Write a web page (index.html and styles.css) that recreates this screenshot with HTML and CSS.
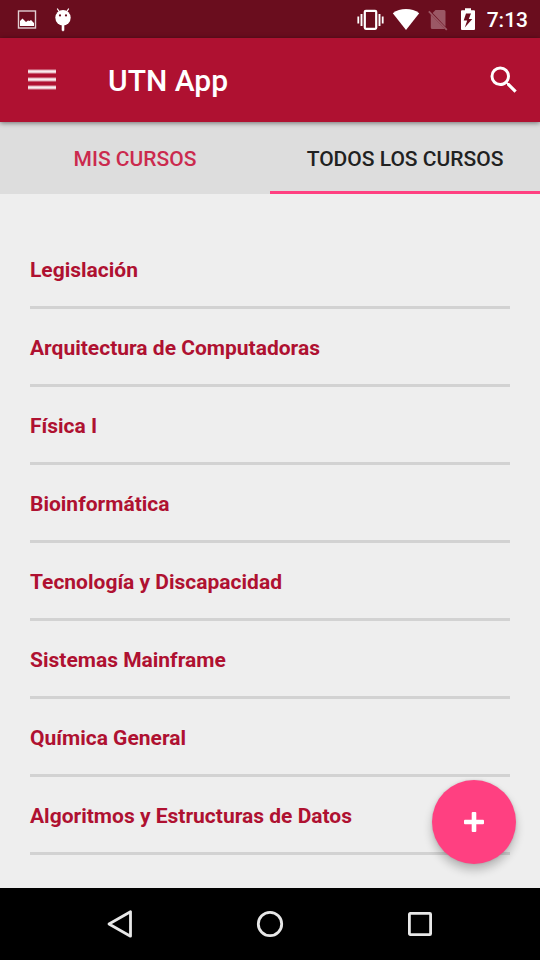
FILE: index.html
```html
<!DOCTYPE html>
<html lang="es">
<head>
<meta charset="utf-8">
<meta name="viewport" content="width=device-width, initial-scale=1">
<title>UTN App</title>
<link rel="stylesheet" href="styles.css">
</head>
<body>
<div class="screen">
  <div class="status-bar">
    <div class="status-group">
      <svg width="20" height="20" viewBox="0 0 20 20" aria-hidden="true">
        <rect x="1.500" y="1" width="17" height="17" fill="none" stroke="#e2cfd2" stroke-width="1.400"/>
        <path d="M3 16v-5l2.500-2.500L9 12l2-1.500 1.500.5 1.500-1 3 3v3z" fill="#fff"/>
      </svg>
      <svg width="18" height="24" viewBox="0 0 18 24" aria-hidden="true">
        <path d="M3.500 1l2 3M14.500 1l-2 3" stroke="#fff" stroke-width="1.300" stroke-linecap="round"/>
        <circle cx="9" cy="9.700" r="7.700" fill="#fff"/>
        <circle cx="6" cy="7.400" r="1.100" fill="#6a0d1e"/>
        <circle cx="12" cy="7.400" r="1.100" fill="#6a0d1e"/>
        <path d="M8 17h2v5a1 1 0 0 1-2 0z" fill="#fff" stroke="#fff" stroke-width=".6"/>
      </svg>
    </div>
    <div class="status-group status-system">
      <svg width="28" height="24" viewBox="0 0 28 24" aria-hidden="true">
        <rect x="8.800" y="2.800" width="11.400" height="18" rx="1" fill="none" stroke="#fff" stroke-width="2.200"/>
        <path d="M5.500 6v12M23.500 6v12" stroke="#fff" stroke-width="1.900"/>
        <path d="M2.300 8.500v7M26.700 8.500v7" stroke="#fff" stroke-width="1.800"/>
      </svg>
      <svg width="28" height="24" viewBox="0 0 28 24" aria-hidden="true">
        <path d="M14 22L.8 5.300C4.500 2.300 9 1 14 1S23.500 2.300 27.200 5.300z" fill="#fff"/>
      </svg>
      <svg width="20" height="24" viewBox="0 0 20 24" aria-hidden="true">
        <path d="M7.500 2H16a1.500 1.500 0 0 1 1.500 1.500v15.300L4.600 5zM2.800 6.500L16.800 21H4.300a1.500 1.500 0 0 1-1.500-1.500z" fill="#9b5865"/>
        <path d="M.8 3.300l18 18.500" stroke="#9b5865" stroke-width="1.700"/>
      </svg>
      <svg width="16" height="24" viewBox="0 0 16 24" aria-hidden="true">
        <path d="M5 .3h6v2h3a1 1 0 0 1 1 1V21a1 1 0 0 1-1 1H2a1 1 0 0 1-1-1V3.300a1 1 0 0 1 1-1h3z" fill="#fff"/>
        <path d="M11 5.500H6L3.700 12.500h3.500l-2.400 7 7.500-8.500H8.800z" fill="#6a0d1e"/>
      </svg>
      <time class="clock">7:13</time>
    </div>
  </div>

  <header class="app-bar">
    <button class="icon-button" type="button" aria-label="Menú">
      <svg width="28" height="24" viewBox="0 0 28 24" aria-hidden="true">
        <path d="M0 3.500h28M0 11.500h28M0 19.500h28" stroke="#fff" stroke-opacity=".6" stroke-width="4"/>
        <path d="M0 3.500h28M0 11.500h28M0 19.500h28" stroke="#fff" stroke-opacity=".8" stroke-width="2"/>
      </svg>
    </button>
    <h1 class="title">UTN App</h1>
    <button class="icon-button" type="button" aria-label="Buscar">
      <svg width="36" height="36" viewBox="0 0 24 24" aria-hidden="true">
        <path fill="#fff" d="M15.500 14h-.79l-.28-.27A6.471 6.471 0 0 0 16 9.500 6.500 6.500 0 1 0 9.500 16c1.610 0 3.090-.59 4.230-1.570l.27.28v.79l5 4.990L20.490 19l-4.990-5zm-6 0C7.010 14 5 11.990 5 9.500S7.010 5 9.500 5 14 7.010 14 9.500 11.990 14 9.500 14z"/>
      </svg>
    </button>
  </header>

  <div class="tabs" role="tablist">
    <button class="tab" type="button" role="tab" aria-selected="false">MIS CURSOS</button>
    <button class="tab tab-active" type="button" role="tab" aria-selected="true">TODOS LOS CURSOS</button>
  </div>

  <main class="content">
    <ul class="courses">
      <li class="course"><a href="#">Legislación</a></li>
      <li class="course"><a href="#">Arquitectura de Computadoras</a></li>
      <li class="course"><a href="#">Física I</a></li>
      <li class="course"><a href="#">Bioinformática</a></li>
      <li class="course"><a href="#">Tecnología y Discapacidad</a></li>
      <li class="course"><a href="#">Sistemas Mainframe</a></li>
      <li class="course"><a href="#">Química General</a></li>
      <li class="course"><a href="#">Algoritmos y Estructuras de Datos</a></li>
    </ul>
    <button class="fab" type="button" aria-label="Agregar">
      <svg width="20" height="20" viewBox="0 0 20 20" aria-hidden="true">
        <rect x="7.700" y="0" width="4.600" height="20" rx="1" fill="#fff"/>
        <rect x="0" y="7.700" width="20" height="4.600" rx="1" fill="#fff"/>
      </svg>
    </button>
  </main>

  <nav class="nav-bar" aria-label="Sistema">
    <button class="nav-button" type="button" aria-label="Atrás">
      <svg width="30" height="30" viewBox="0 0 30 30" aria-hidden="true">
        <path d="M25.500 2.800v24.400L4 15z" fill="none" stroke="#e8e8e8" stroke-width="2.800" stroke-linejoin="round"/>
      </svg>
    </button>
    <button class="nav-button" type="button" aria-label="Inicio">
      <svg width="30" height="30" viewBox="0 0 30 30" aria-hidden="true">
        <circle cx="15" cy="15" r="11.700" fill="none" stroke="#e8e8e8" stroke-width="2.800"/>
      </svg>
    </button>
    <button class="nav-button" type="button" aria-label="Recientes">
      <svg width="30" height="30" viewBox="0 0 30 30" aria-hidden="true">
        <rect x="4.400" y="4.400" width="21.200" height="21.200" rx=".8" fill="none" stroke="#e8e8e8" stroke-width="2.800"/>
      </svg>
    </button>
  </nav>
</div>
</body>
</html>
```
FILE: styles.css
```css
* {
  box-sizing: border-box;
}

body {
  margin: 0;
  background: #eee;
  font-family: Roboto, "Liberation Sans", sans-serif;
  font-size: 21px;
}

button {
  margin: 0;
  padding: 0;
  border: 0;
  background: none;
  font: inherit;
  cursor: pointer;
}

svg {
  display: block;
  flex: none;
}

.screen {
  display: flex;
  flex-direction: column;
  min-height: 100vh;
}

.status-bar {
  display: flex;
  align-items: center;
  justify-content: space-between;
  height: 38px;
  padding: 2px 12px 0 17px;
  background: #6a0d1e;
  color: #fff;
}

.status-group {
  display: flex;
  align-items: center;
  gap: 17px;
}

.status-system {
  gap: 8px;
}

.status-system svg:nth-of-type(4) {
  margin-left: 4px;
}

.clock {
  margin-left: 3px;
  font-weight: 500;
  line-height: 24px;
}

.app-bar {
  position: relative;
  z-index: 1;
  display: flex;
  align-items: center;
  height: 84px;
  padding: 0 18px 0 28px;
  background: #af1131;
  color: #fff;
  box-shadow: 0 1px 5px rgba(0, 0, 0, 0.5);
}

.title {
  flex: 1;
  margin: 0 0 0 52px;
  padding-top: 2px;
  font-size: 30px;
  font-weight: 500;
  line-height: 36px;
}

.tabs {
  display: flex;
  height: 72px;
  background: #ddd;
}

.tab {
  flex: 1;
  border-bottom: 3px solid transparent;
  padding-top: 5px;
  color: #cb2a4e;
  font-weight: 500;
}

.tab-active {
  border-color: #ff4081;
  color: #212121;
}

.content {
  position: relative;
  flex: 1;
  padding: 37px 30px 33px;
}

.courses {
  margin: 0;
  padding: 0;
  list-style: none;
}

.course {
  border-bottom: 3px solid #d2d2d2;
}

.course a {
  display: block;
  padding: 27px 0 24px;
  color: #af1131;
  font-weight: 700;
  line-height: 24px;
  text-decoration: none;
}

.fab {
  position: absolute;
  right: 24px;
  bottom: 24px;
  display: grid;
  place-items: center;
  width: 84px;
  height: 84px;
  border-radius: 50%;
  background: #ff4081;
  box-shadow: 0 6px 10px rgba(0, 0, 0, 0.24), 0 0 3px rgba(0, 0, 0, 0.12);
}

.nav-bar {
  display: flex;
  justify-content: center;
  height: 72px;
  background: #000;
}

.nav-button {
  display: grid;
  place-items: center;
  width: 150px;
}
```
